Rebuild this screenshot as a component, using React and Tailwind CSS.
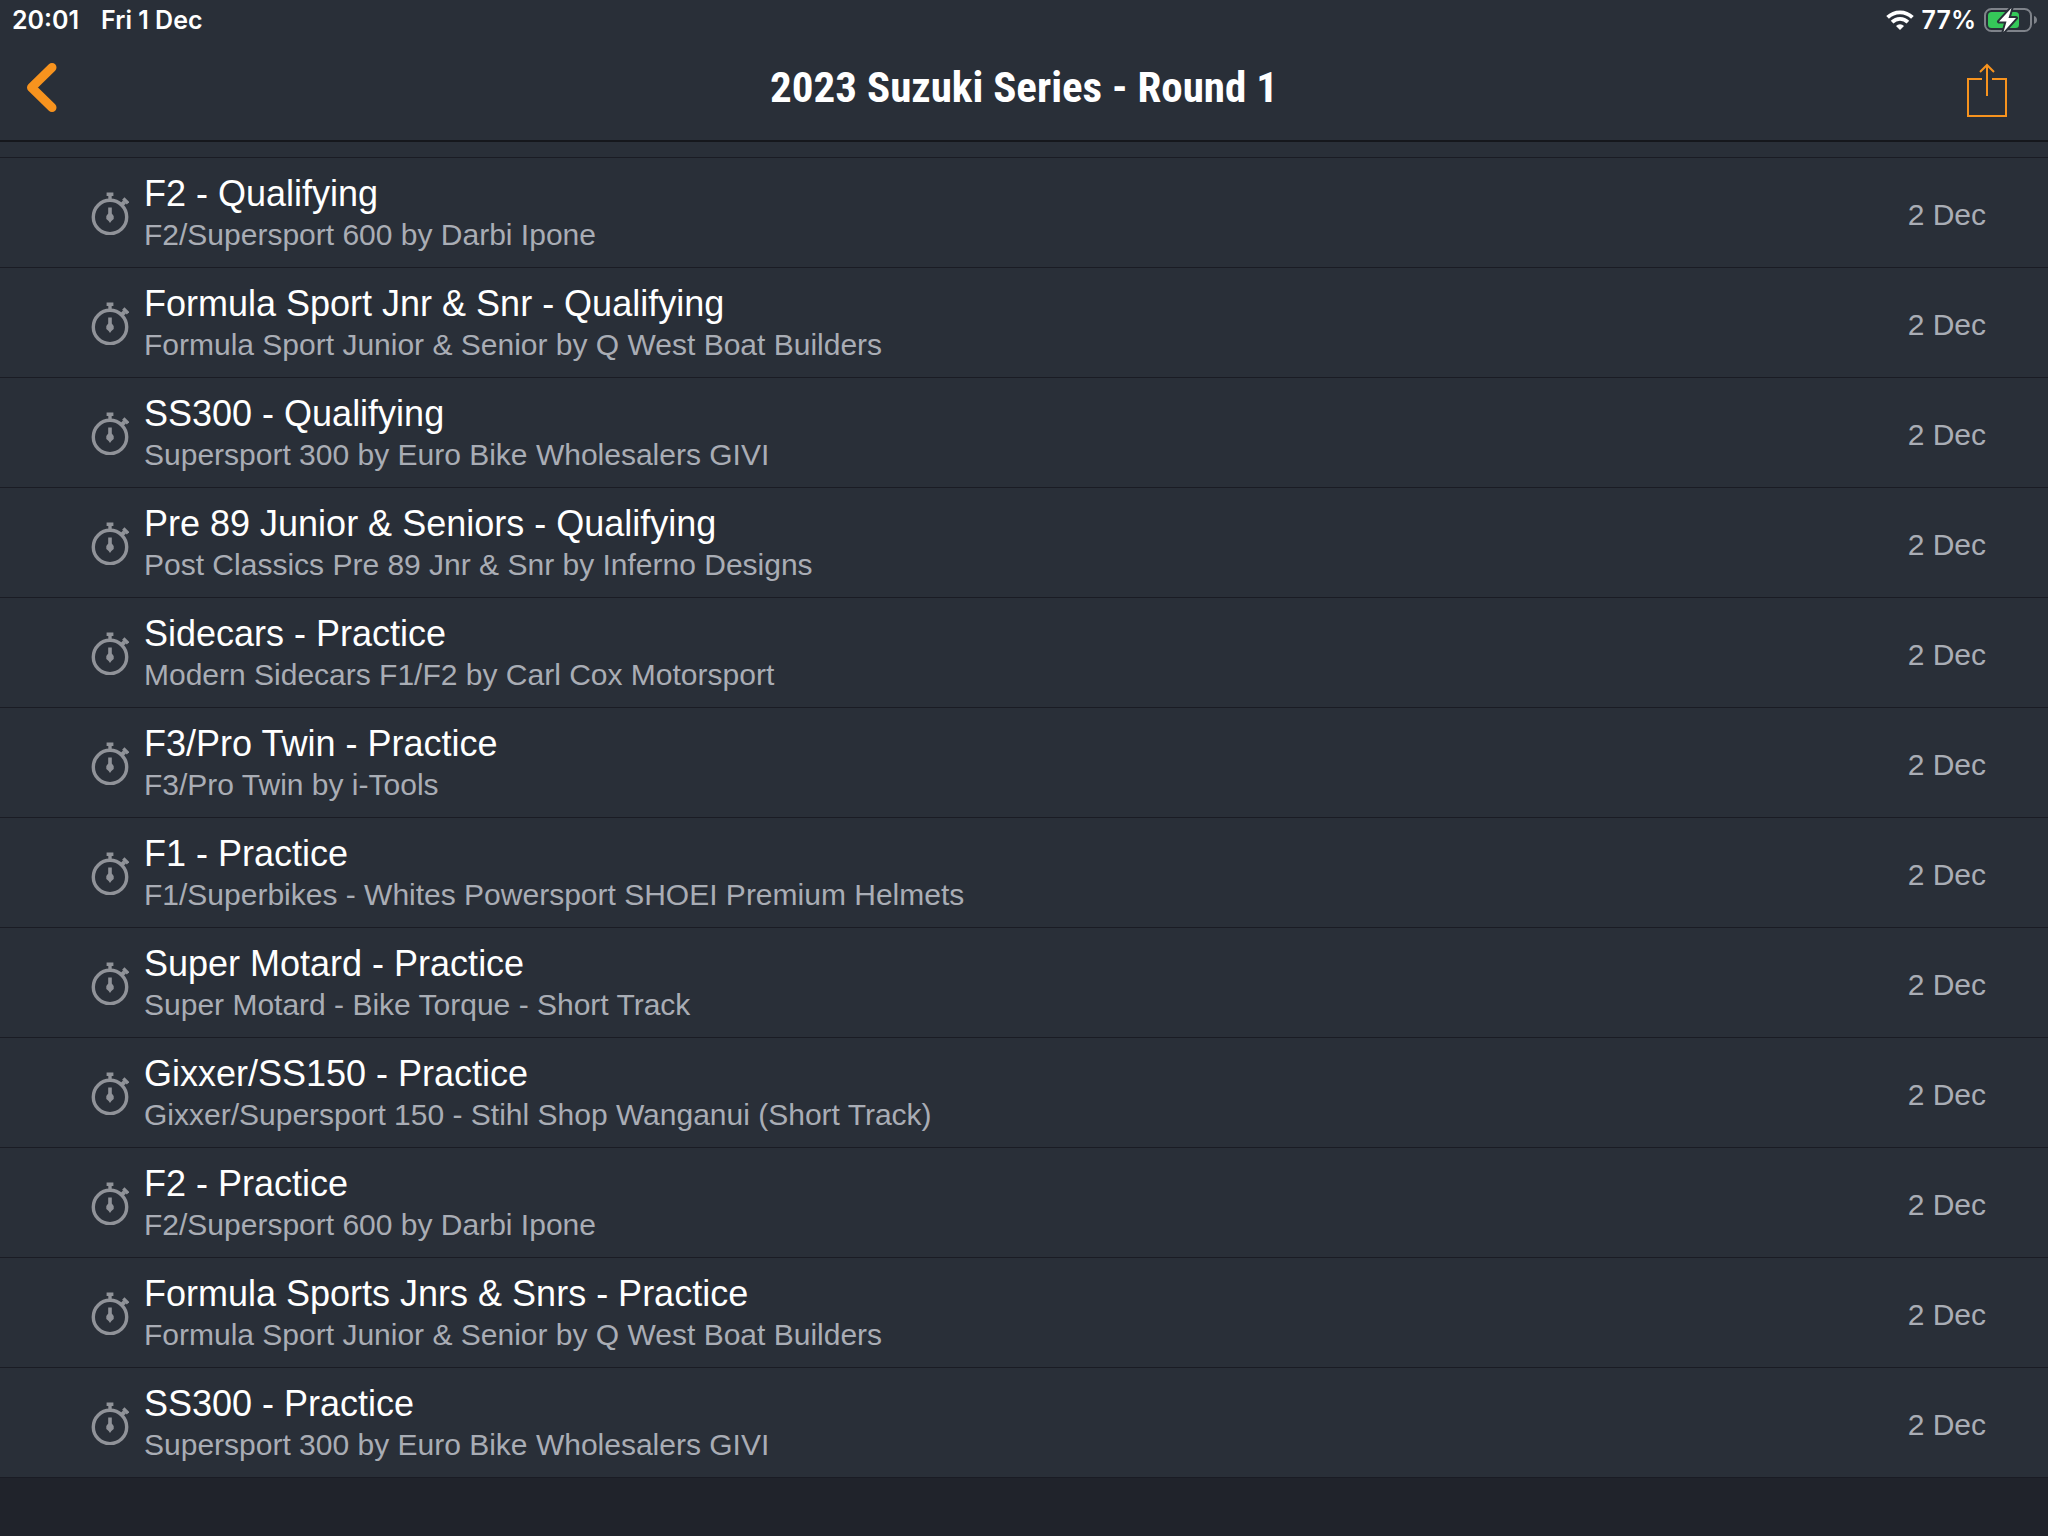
const sessions = [
  { name: "F2 - Qualifying", group: "F2/Supersport 600 by Darbi Ipone", date: "2 Dec" },
  { name: "Formula Sport Jnr & Snr - Qualifying", group: "Formula Sport Junior & Senior by Q West Boat Builders", date: "2 Dec" },
  { name: "SS300 - Qualifying", group: "Supersport 300 by Euro Bike Wholesalers GIVI", date: "2 Dec" },
  { name: "Pre 89 Junior & Seniors - Qualifying", group: "Post Classics Pre 89 Jnr & Snr by Inferno Designs", date: "2 Dec" },
  { name: "Sidecars - Practice", group: "Modern Sidecars F1/F2 by Carl Cox Motorsport", date: "2 Dec" },
  { name: "F3/Pro Twin - Practice", group: "F3/Pro Twin by i-Tools", date: "2 Dec" },
  { name: "F1 - Practice", group: "F1/Superbikes - Whites Powersport SHOEI Premium Helmets", date: "2 Dec" },
  { name: "Super Motard - Practice", group: "Super Motard - Bike Torque - Short Track", date: "2 Dec" },
  { name: "Gixxer/SS150 - Practice", group: "Gixxer/Supersport 150 - Stihl Shop Wanganui (Short Track)", date: "2 Dec" },
  { name: "F2 - Practice", group: "F2/Supersport 600 by Darbi Ipone", date: "2 Dec" },
  { name: "Formula Sports Jnrs & Snrs - Practice", group: "Formula Sport Junior & Senior by Q West Boat Builders", date: "2 Dec" },
  { name: "SS300 - Practice", group: "Supersport 300 by Euro Bike Wholesalers GIVI", date: "2 Dec" },
];

function WifiIcon() {
  return (
    <svg width="28" height="20" viewBox="0 0 28 20" fill="none" stroke="#fff" strokeWidth="3.8">
      <path d="M1.6 7.4a17.6 17.6 0 0 1 24.8 0" />
      <path d="M6.1 12.2a11.2 11.2 0 0 1 15.8 0" />
      <path d="M14 20l-4-4.1a5.8 5.8 0 0 1 8 0z" fill="#fff" stroke="none" />
    </svg>
  );
}

function BatteryIcon() {
  return (
    <svg width="54" height="26" viewBox="0 0 54 26">
      <rect x="1" y="2" width="46" height="22" rx="6.5" fill="none" stroke="#7f838a" strokeWidth="2" />
      <path d="M50 9v8c2-.6 3-2.2 3-4s-1-3.4-3-4z" fill="#7f838a" />
      <rect x="4" y="5" width="31" height="16" rx="3.5" fill="#35c759" />
      <path
        d="M27.5 1L15 14.500h7.500L19.500 25 32 11h-7.500z"
        fill="#fff"
        stroke="#292f38"
        strokeWidth="4"
        strokeLinejoin="round"
        paintOrder="stroke"
      />
    </svg>
  );
}

function ShareIcon() {
  return (
    <svg width="40" height="54" viewBox="0 0 40 54" fill="none" stroke="#f7931e" strokeWidth="2">
      <path d="M15 16H1v37h38V16H25" />
      <path d="M20 33V2M13 9l7-7 7 7" />
    </svg>
  );
}

function StopwatchIcon() {
  return (
    <svg width="38" height="44" viewBox="0 0 38 44" className="shrink-0" fill="none" stroke="#909399">
      <circle cx="19" cy="26" r="16.7" strokeWidth="3.4" />
      <path d="M15.6 3.200h6.800M19 3v6" strokeWidth="3.4" />
      <path d="M30 14.500l3.500-3.500" strokeWidth="4" />
      <path d="M31.300 9l4.700 4.700" strokeWidth="3.400" transform="translate(1 -1.500)" />
      <path d="M17.2 16.500h3.600v6l1.900 2.500v3l-2.300 2-1.400 2-1.400-2-2.300-2v-3l1.900-2.500z" fill="#909399" stroke="none" />
    </svg>
  );
}

function StatusBar() {
  return (
    <div className="flex h-10 items-center justify-between pl-3 pr-[10px] font-['Inter',sans-serif] text-[25px] font-semibold">
      <div className="flex gap-[22px] pt-0.5">
        <span>20:01</span>
        <span>Fri 1 Dec</span>
      </div>
      <div className="flex items-center gap-2">
        <WifiIcon />
        <span className="pt-0.5">77%</span>
        <BatteryIcon />
      </div>
    </div>
  );
}

function SessionRow({ session }) {
  return (
    <li className="border-b border-[#1a1c24]">
      <a href="#" className="flex h-[109px] items-center pl-[91px] pr-[62px]">
        <StopwatchIcon />
        <div className="ml-[15px] flex-1 pt-1">
          <p className="text-[36px] leading-10">{session.name}</p>
          <p className="text-[30px] leading-[42px] text-[#a9adb5]">{session.group}</p>
        </div>
        <span className="pt-1 text-[30px] leading-10 text-[#a9adb5]">{session.date}</span>
      </a>
    </li>
  );
}

export default function App() {
  return (
    <div className="min-h-screen bg-[#20232b] font-['Liberation_Sans',sans-serif] text-white">

      <header className="border-b-2 border-[#15171c] bg-[#292f38]">
        <StatusBar />
        <div className="grid h-[100px] grid-cols-[1fr_auto_1fr] items-start px-[26px] pt-[22px]">
          <button aria-label="Back" className="justify-self-start">
            <svg width="32" height="50" viewBox="0 0 32 50" fill="none" stroke="#f7931e" strokeWidth="9" strokeLinecap="round" strokeLinejoin="round">
              <path d="M26 5.500L5.500 25.500 26 45.500" />
            </svg>
          </button>
          <h1 className="font-['Roboto_Condensed','Roboto',sans-serif] text-[43px] leading-[50px] font-bold">
            2023 Suzuki Series - Round 1
          </h1>
          <button aria-label="Share" className="mr-[15px] justify-self-end pt-px">
            <ShareIcon />
          </button>
        </div>
      </header>

      <ul className="bg-[#292f38]">
        <li aria-hidden="true" className="h-4 border-b border-[#1a1c24]" />
        {sessions.map((session) => (
          <SessionRow key={session.name} session={session} />
        ))}
      </ul>

    </div>
  );
}
